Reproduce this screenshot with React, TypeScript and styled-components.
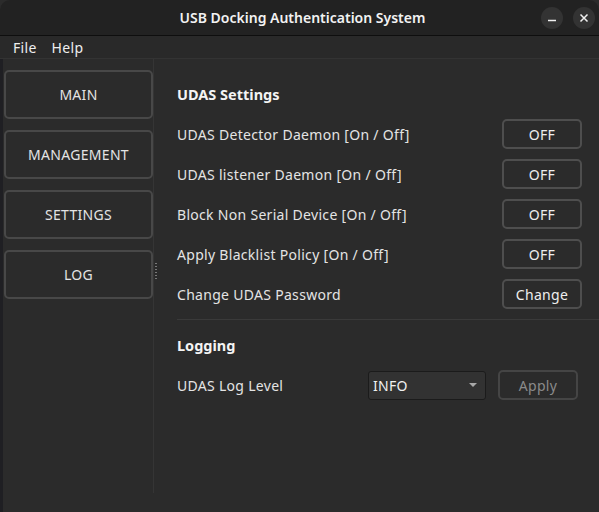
import React from "react";
import styled, { createGlobalStyle } from "styled-components";

const Global = createGlobalStyle`
  html, body { margin: 0; padding: 0; background: #2b2b2b; }
  body { font-family: "Noto Sans", "DejaVu Sans", sans-serif; color: #e8e8e8; }
  * { box-sizing: border-box; }
`;

const Window = styled.div`
  width: 599px;
  height: 512px;
  display: flex;
  flex-direction: column;
  background: #2b2b2b;
  overflow: hidden;
`;

const TitleBar = styled.div`
  height: 36px;
  flex: none;
  background: #222222;
  border-bottom: 1px solid #0e0e0e;
  border-top-left-radius: 10px;
  border-top-right-radius: 10px;
  position: relative;
  display: flex;
  align-items: center;
  justify-content: center;
`;

const Title = styled.div`
  font-size: 14px;
  font-weight: 600;
  color: #f2f2f2;
  margin-left: 6px;
`;

const WinButtons = styled.div`
  position: absolute;
  right: 4px;
  top: 7px;
  display: flex;
  gap: 10px;
`;

const WinButton = styled.div`
  width: 22px;
  height: 22px;
  border-radius: 50%;
  background: #333333;
  display: flex;
  align-items: center;
  justify-content: center;
`;

const MenuBar = styled.div`
  height: 23px;
  flex: none;
  background: #292929;
  border-bottom: 1px solid #333333;
  display: flex;
  align-items: center;
  padding-left: 13px;
  gap: 15px;
  font-size: 14px;
  letter-spacing: 0.3px;
  color: #eeeeee;
`;

const Body = styled.div`
  flex: 1;
  display: flex;
  border-left: 3px solid #1f1f23;
`;

const Sidebar = styled.div`
  width: 151px;
  flex: none;
  display: flex;
  flex-direction: column;
  gap: 11px;
  padding: 11px 0 0 1px;
  height: 434px;
  border-right: 1px solid #353535;
`;

const NavButton = styled.div`
  height: 49px;
  border: 2px solid #484848;
  border-radius: 5px;
  background: #2b2b2b;
  display: flex;
  align-items: center;
  justify-content: center;
  font-size: 14px;
  letter-spacing: 0.3px;
  color: #e4e4e4;
`;

const Handle = styled.div`
  width: 3px;
  flex: none;
  display: flex;
  align-items: center;
  justify-content: center;
  height: 434px;
`;

const Dots = styled.div`
  width: 2px;
  height: 18px;
  margin-top: -8px;
  background: repeating-linear-gradient(to bottom, #7a7a7a 0 1px, transparent 1px 3px);
`;

const Content = styled.div`
  flex: 1;
  display: flex;
  flex-direction: column;
  padding: 24px 17px 0 20px;
`;

const SectionTitle = styled.div`
  font-size: 14.5px;
  font-weight: 700;
  color: #f4f4f4;
  height: 22px;
  display: flex;
  align-items: center;
  margin-bottom: 14px;
`;

const Row = styled.div`
  height: 30px;
  display: flex;
  align-items: center;
  justify-content: space-between;
  margin-bottom: 10px;
  font-size: 14px;
  letter-spacing: 0.3px;
  color: #e4e4e4;
`;

const Button = styled.div<{ $disabled?: boolean }>`
  width: 80px;
  height: 30px;
  border: 2px solid ${(p) => (p.$disabled ? "#454545" : "#4e4e4e")};
  border-radius: 5px;
  display: flex;
  align-items: center;
  justify-content: center;
  font-size: 14px;
  letter-spacing: 0.3px;
  color: ${(p) => (p.$disabled ? "#8a8a8a" : "#eeeeee")};
`;

const Divider = styled.div`
  height: 1px;
  background: #3a3a3a;
  margin: 0 -17px 14px 0;
`;

const LogRow = styled.div`
  display: flex;
  align-items: center;
  height: 30px;
  font-size: 14px;
  letter-spacing: 0.3px;
  color: #e4e4e4;
`;

const LogLabel = styled.div`
  width: 191px;
`;

const Combo = styled.div`
  width: 118px;
  height: 29px;
  background: #323232;
  border: 1px solid #1b1b1b;
  border-radius: 3px;
  display: flex;
  align-items: center;
  justify-content: space-between;
  padding: 0 8px 0 4px;
  color: #f0f0f0;
  margin-right: 12px;
`;

const Arrow = styled.div`
  width: 0;
  height: 0;
  border-left: 4px solid transparent;
  border-right: 4px solid transparent;
  border-top: 4px solid #a8a8a8;
`;

export default function App() {
  const rows = [
    ["UDAS Detector Daemon [On / Off]", "OFF"],
    ["UDAS listener Daemon [On / Off]", "OFF"],
    ["Block Non Serial Device [On / Off]", "OFF"],
    ["Apply Blacklist Policy [On / Off]", "OFF"],
    ["Change UDAS Password", "Change"],
  ];
  return (
    <>
      <Global />
      <Window>
        <TitleBar>
          <Title>USB Docking Authentication System</Title>
          <WinButtons>
            <WinButton>
              <svg width="10" height="10" viewBox="0 0 10 10">
                <line x1="1" y1="7.5" x2="9" y2="7.5" stroke="#f0f0f0" strokeWidth="1.5" />
              </svg>
            </WinButton>
            <WinButton>
              <svg width="10" height="10" viewBox="0 0 10 10">
                <path d="M1.5 1.5 L8.5 8.5 M8.5 1.5 L1.5 8.5" stroke="#f0f0f0" strokeWidth="1.5" />
              </svg>
            </WinButton>
          </WinButtons>
        </TitleBar>
        <MenuBar>
          <span>File</span>
          <span>Help</span>
        </MenuBar>
        <Body>
          <Sidebar>
            <NavButton>MAIN</NavButton>
            <NavButton>MANAGEMENT</NavButton>
            <NavButton>SETTINGS</NavButton>
            <NavButton>LOG</NavButton>
          </Sidebar>
          <Handle>
            <Dots />
          </Handle>
          <Content>
            <SectionTitle>UDAS Settings</SectionTitle>
            {rows.map(([label, btn]) => (
              <Row key={label}>
                <span>{label}</span>
                <Button>{btn}</Button>
              </Row>
            ))}
            <Divider />
            <SectionTitle>Logging</SectionTitle>
            <LogRow>
              <LogLabel>UDAS Log Level</LogLabel>
              <Combo>
                <span>INFO</span>
                <Arrow />
              </Combo>
              <Button $disabled>Apply</Button>
            </LogRow>
          </Content>
        </Body>
      </Window>
    </>
  );
}
